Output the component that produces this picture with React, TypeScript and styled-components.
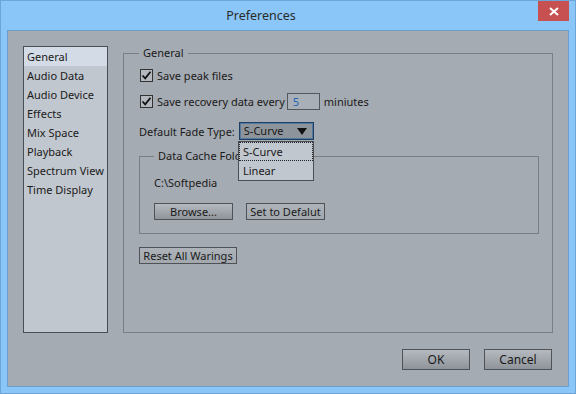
import React from "react";
import styled, { createGlobalStyle } from "styled-components";

const Global = createGlobalStyle`
  html, body { margin: 0; padding: 0; background: #8ac6f8; }
  body { font-family: "Noto Sans", "Open Sans", sans-serif; font-size: 11px; color: #1a1a1a; }
  * { box-sizing: border-box; }
`;

const Window = styled.div`
  width: 576px;
  height: 394px;
  background: #8ac6f8;
  border: 1px solid #6ea5d8;
  display: flex;
  flex-direction: column;
  overflow: hidden;
`;

const TitleBar = styled.div`
  height: 29px;
  display: flex;
  align-items: flex-start;
  position: relative;
`;

const Title = styled.div`
  flex: 1;
  text-align: center;
  padding-right: 54px;
  padding-top: 5px;
  font-size: 12.5px;
  color: #2b2b2b;
  line-height: 20px;
`;

const CloseBtn = styled.div`
  position: absolute;
  right: 6px;
  top: 0;
  width: 31px;
  height: 20px;
  background: #c75050;
  color: #fff;
  display: flex;
  align-items: center;
  justify-content: center;
`;

const Body = styled.div`
  margin: 0 6px;
  height: 357px;
  background: #a5abb2;
  border: 1px solid #6c9fcf;
  padding: 15px 15px 15px 15px;
  display: flex;
  flex-direction: column;
  gap: 16px;
  position: relative;
`;

const Panels = styled.div`
  display: flex;
  gap: 15px;
  height: 287px;
`;

const Sidebar = styled.ul`
  list-style: none;
  margin: 0;
  padding: 0;
  width: 85px;
  height: 287px;
  background: #c1c7ce;
  border: 1px solid #4a4e54;
`;

const NavItem = styled.li<{ $active?: boolean }>`
  height: 19px;
  line-height: 19px;
  padding-left: 3px;
  background: ${(p) => (p.$active ? "#d3dce6" : "transparent")};
  white-space: nowrap;
`;

const Group = styled.fieldset`
  margin: 0;
  padding: 0 0 0 15px;
  border: 1px solid #7b7f85;
  min-width: 0;
`;

const MainGroup = styled(Group)`
  flex: 1;
  height: 287px;
  display: flex;
  flex-direction: column;
`;

const Legend = styled.legend`
  padding: 0 4px;
  margin-left: 0;
  line-height: 14px;
  color: #1a1a1a;
`;

const Row = styled.div<{ $top: number }>`
  display: flex;
  align-items: center;
  height: 18px;
  margin-top: ${(p) => p.$top}px;
  white-space: nowrap;
`;

const CheckBox = styled.span`
  width: 13px;
  height: 13px;
  border: 1px solid #333;
  background: #b3b9bf;
  display: inline-flex;
  align-items: center;
  justify-content: center;
  margin-left: 1px;
  margin-right: 4px;
`;

const NumInput = styled.span`
  width: 33px;
  height: 17px;
  border: 1px solid #54585d;
  background: #a9afb6;
  color: #1f63b8;
  padding-left: 5px;
  line-height: 15px;
  margin: 0 4px 0 2px;
`;

const Select = styled.div`
  width: 75px;
  height: 18px;
  border: 1px solid #1f3e63;
  box-shadow: inset 0 0 0 1px #55789e;
  background: #8e949b;
  margin-left: 4px;
  display: flex;
  align-items: center;
  justify-content: space-between;
  padding: 0 6px 0 4px;
  line-height: 16px;
`;

const Dropdown = styled.div`
  position: absolute;
  left: 230px;
  top: 110px;
  width: 76px;
  height: 40px;
  background: #c1c7ce;
  border: 1px solid #4b4f55;
  z-index: 3;
`;

const DropItem = styled.div<{ $focus?: boolean }>`
  height: 19px;
  line-height: 17px;
  padding-left: 3px;
  border: 1px ${(p) => (p.$focus ? "dotted #222" : "solid transparent")};
`;

const CacheGroup = styled(Group)`
  margin-left: 0;
  width: 400px;
  height: 85px;
  margin-top: 9px;
  padding-left: 14px;
`;

const Path = styled.div`
  margin-top: 12px;
  height: 16px;
  line-height: 16px;
`;

const BtnRow = styled.div`
  display: flex;
  gap: 13px;
  margin-top: 12px;
`;

const Button = styled.div<{ $w: number; $flat?: boolean }>`
  width: ${(p) => p.$w}px;
  height: 17px;
  border: 1px solid #4f5358;
  background: ${(p) =>
    p.$flat
      ? "linear-gradient(#adb3b9, #a2a8ae)"
      : "linear-gradient(#b5bac0, #8f949a)"};
  display: flex;
  align-items: center;
  justify-content: center;
  line-height: 15px;
  white-space: nowrap;
`;

const Footer = styled.div`
  display: flex;
  justify-content: flex-end;
  gap: 14px;
  padding-right: 1px;
`;

const DialogButton = styled(Button)`
  height: 21px;
  font-size: 12px;
`;

const Check = () => (
  <svg width="11" height="11" viewBox="0 0 11 11">
    <path d="M1.5 5.5 L4.2 8.3 L9.5 1.8" fill="none" stroke="#111" strokeWidth="1.8" />
  </svg>
);

export default function App() {
  const nav = ["General", "Audio Data", "Audio Device", "Effects", "Mix Space", "Playback", "Spectrum View", "Time Display"];
  return (
    <Window>
      <Global />
      <TitleBar>
        <Title>Preferences</Title>
        <CloseBtn>
          <svg width="10" height="9" viewBox="0 0 10 9">
            <path d="M1 1 L9 8 M9 1 L1 8" stroke="#fff" strokeWidth="2" />
          </svg>
        </CloseBtn>
      </TitleBar>
      <Body>
        <Panels>
          <Sidebar>
            {nav.map((n, i) => (
              <NavItem key={n} $active={i === 0}>{n}</NavItem>
            ))}
          </Sidebar>
          <MainGroup>
            <Legend>General</Legend>
            <Row $top={6}>
              <CheckBox><Check /></CheckBox>
              Save peak files
            </Row>
            <Row $top={8}>
              <CheckBox><Check /></CheckBox>
              Save recovery data every
              <NumInput>5</NumInput>
              miniutes
            </Row>
            <Row $top={12}>
              Default Fade Type:
              <Select>
                <span>S-Curve</span>
                <svg width="10" height="7" viewBox="0 0 10 7">
                  <path d="M0 0 H10 L5 7 Z" fill="#111" />
                </svg>
              </Select>
            </Row>
            <CacheGroup>
              <Legend>Data Cache Folder</Legend>
              <Path>C:\Softpedia</Path>
              <BtnRow>
                <Button $w={79}>Browse...</Button>
                <Button $w={79} $flat>Set to Defalut</Button>
              </BtnRow>
            </CacheGroup>
            <Row $top={12}>
              <Button $w={98} $flat>Reset All Warings</Button>
            </Row>
          </MainGroup>
        </Panels>
        <Footer>
          <DialogButton $w={68}>OK</DialogButton>
          <DialogButton $w={68}>Cancel</DialogButton>
        </Footer>
        <Dropdown>
          <DropItem $focus>S-Curve</DropItem>
          <DropItem>Linear</DropItem>
        </Dropdown>
      </Body>
    </Window>
  );
}
